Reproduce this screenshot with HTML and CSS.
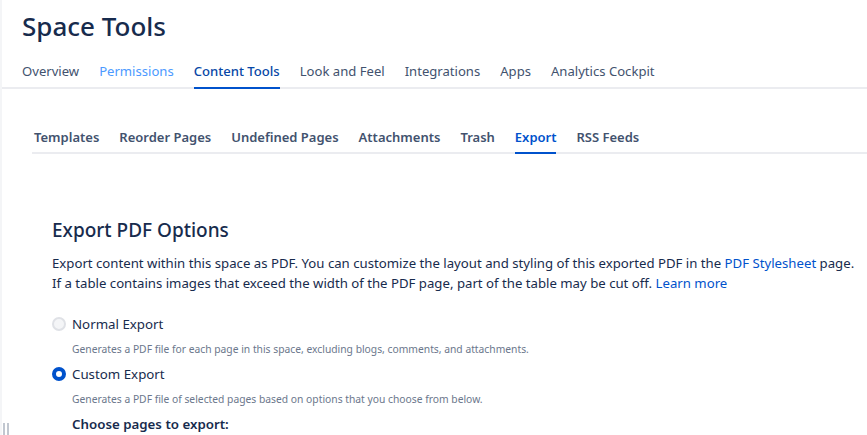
FILE: index.html
```html
<!DOCTYPE html>
<html lang="en">
<head>
    <meta charset="UTF-8">
    <meta name="viewport" content="width=device-width, initial-scale=1.0">
    <link rel="stylesheet" href="styles.css">
    <title>Space Tools</title>
</head>
<body>
    <div class="sidebar-edge">
        <span class="grip"></span>
    </div>
    <main class="page">
        <h1 class="page-title">Space Tools</h1>
        <nav class="tabs">
            <a class="tab">Overview</a>
            <a class="tab tab-visited">Permissions</a>
            <a class="tab tab-active">Content Tools</a>
            <a class="tab">Look and Feel</a>
            <a class="tab">Integrations</a>
            <a class="tab">Apps</a>
            <a class="tab">Analytics Cockpit</a>
        </nav>

        <div class="content">
            <nav class="subtabs">
                <a class="subtab">Templates</a>
                <a class="subtab">Reorder Pages</a>
                <a class="subtab">Undefined Pages</a>
                <a class="subtab">Attachments</a>
                <a class="subtab">Trash</a>
                <a class="subtab subtab-active">Export</a>
                <a class="subtab">RSS Feeds</a>
            </nav>

            <section class="export">
                <h2>Export PDF Options</h2>
                <p class="intro">
                    Export content within this space as PDF. You can customize the layout and styling of this exported PDF in the <a href="#">PDF Stylesheet</a> page.<br>
                    If a table contains images that exceed the width of the PDF page, part of the table may be cut off. <a href="#">Learn more</a>
                </p>

                <div class="option">
                    <label class="radio">
                        <span class="radio-dot"></span>
                        Normal Export
                    </label>
                    <p class="option-desc">Generates a PDF file for each page in this space, excluding blogs, comments, and attachments.</p>
                </div>
                <div class="option">
                    <label class="radio">
                        <span class="radio-dot checked"></span>
                        Custom Export
                    </label>
                    <p class="option-desc">Generates a PDF file of selected pages based on options that you choose from below.</p>
                </div>
                <h3 class="choose">Choose pages to export:</h3>
            </section>
        </div>
    </main>
</body>
</html>
```

FILE: styles.css
```css
* {
    margin: 0;
    padding: 0;
    box-sizing: border-box;
}

body {
    font-family: 'Noto Sans', 'Open Sans', sans-serif;
    color: #172b4d;
    background: #fff;
    display: flex;
    height: 435px;
    overflow: hidden;
}

/* left edge of the sidebar */
.sidebar-edge {
    width: 2px;
    background: #f4f5f7;
    position: relative;
    flex-shrink: 0;
}

.grip {
    position: absolute;
    left: 3px;
    top: 423px;
    width: 6px;
    height: 12px;
    border-left: 2px solid #c1c7d0;
    border-right: 2px solid #c1c7d0;
}

.page {
    flex: 1;
    padding-top: 8px;
}

.page-title {
    font-size: 26px;
    font-weight: 500;
    line-height: 36px;
    margin-left: 20px;
    color: #172b4d;
}

.tabs {
    display: flex;
    gap: 20px;
    padding-left: 20px;
    margin-top: 13px;
    border-bottom: 2px solid #ebecf0;
}

.tab {
    font-size: 13.1px;
    color: #42526e;
    line-height: 20px;
    padding: 4px 0 6px;
    position: relative;
}

.tab-visited {
    color: #4c9aff;
}

.tab-active {
    color: #0747a6;
    font-weight: 500;
}

.tab-active::after {
    content: "";
    position: absolute;
    left: 0;
    right: 0;
    bottom: -2px;
    height: 2px;
    background: #0052cc;
}

.content {
    padding: 38px 0 0 30px;
}

.subtabs {
    display: flex;
    gap: 20px;
    border-bottom: 2px solid #ebecf0;
    padding-left: 2px;
}

.subtab {
    font-size: 13px;
    font-weight: 600;
    color: #42526e;
    line-height: 20px;
    padding-bottom: 5px;
    position: relative;
}

.subtab-active {
    color: #0052cc;
}

.subtab-active::after {
    content: "";
    position: absolute;
    left: 0;
    right: 0;
    bottom: -2px;
    height: 2px;
    background: #0052cc;
}

.export {
    padding: 64px 0 0 20px;
}

.export h2 {
    font-size: 19px;
    font-weight: 500;
    line-height: 24px;
    color: #172b4d;
}

.intro {
    font-size: 13.2px;
    line-height: 20px;
    margin-top: 11px;
    color: #172b4d;
}

.intro a {
    color: #0052cc;
    text-decoration: none;
}

.option {
    margin-top: 7px;
}

.option:first-of-type {
    margin-top: 21px;
}

.radio {
    display: flex;
    align-items: center;
    gap: 6px;
    font-size: 13.3px;
    line-height: 20px;
    color: #172b4d;
}

.radio-dot {
    width: 14px;
    height: 14px;
    border-radius: 50%;
    background: #f4f5f7;
    border: 2px solid #dfe1e6;
}

.radio-dot.checked {
    background: #fff;
    border: 4px solid #0052cc;
}

.option-desc {
    font-size: 10.3px;
    line-height: 16px;
    color: #6b778c;
    margin: 7px 0 0 20px;
}

.choose {
    font-size: 13.3px;
    font-weight: 600;
    line-height: 20px;
    margin: 7px 0 0 20px;
    color: #172b4d;
}
```
